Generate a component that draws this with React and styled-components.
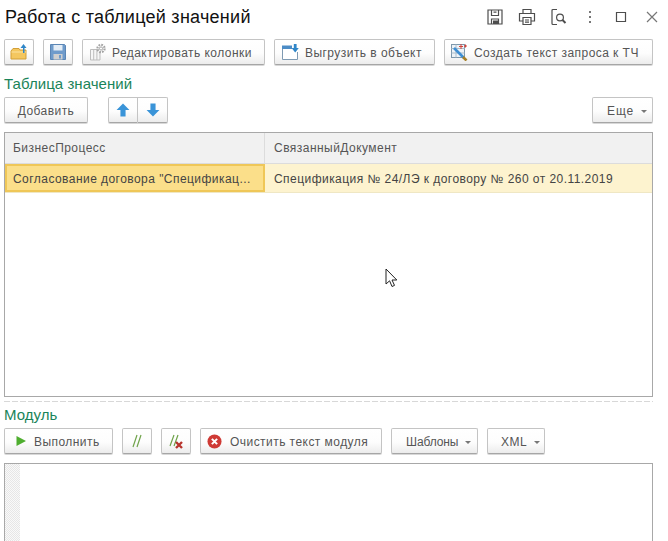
import React from 'react'
import styled, { createGlobalStyle } from 'styled-components'

const GlobalStyle = createGlobalStyle`
  html, body {
    margin: 0;
    padding: 0;
    background: #fff;
    overflow: hidden;
  }
  body {
    font-family: "Liberation Sans", Arial, sans-serif;
    color: #555;
  }
`

const Page = styled.div`
  position: relative;
  width: 668px;
  height: 541px;
  overflow: hidden;
  background: #fff;
`

const Header = styled.div`
  display: flex;
  align-items: center;
  height: 34px;
  padding: 0 0 0 5px;
  box-sizing: border-box;
`

const Title = styled.h1`
  flex: 1;
  margin: 0;
  font-size: 18px;
  font-weight: 400;
  color: #111;
  letter-spacing: 0.26px;
`

const WindowIcons = styled.div`
  display: flex;
  align-items: center;
  margin-right: 7px;
`

const WindowIcon = styled.svg`
  display: block;
  width: 18px;
  height: 18px;
  margin-left: ${props => props.$gap || 0}px;
  fill: none;
  stroke: #4d4d4d;
  stroke-width: 1.2;
`

const Toolbar = styled.div`
  display: flex;
  align-items: center;
  gap: 9px;
  padding: 0 15px 0 4px;
  margin-top: ${props => props.$top || 0}px;
`

const Button = styled.div`
  display: flex;
  align-items: center;
  justify-content: ${props => (props.$pad ? 'flex-start' : 'center')};
  box-sizing: border-box;
  width: ${props => props.$w}px;
  height: 26px;
  padding-left: ${props => props.$pad || 0}px;
  padding-top: 1px;
  background: linear-gradient(#fff 0%, #fdfdfd 55%, #ececec 100%);
  border: 1px solid #c4c4c4;
  border-bottom-color: #a6a6a6;
  border-radius: 2px;
  box-shadow: 0 1px 0 #d8d8d8;
  font-size: 12px;
  letter-spacing: ${props => props.$spacing ?? 0.45}px;
  color: #555;
  white-space: nowrap;
`

const ButtonIcon = styled.svg`
  display: block;
  flex: none;
  width: ${props => props.$size || 18}px;
  height: ${props => props.$size || 18}px;
  margin-top: -1px;
  margin-right: ${props => props.$gap || 0}px;
`

const Caret = styled.span`
  width: 0;
  height: 0;
  margin: 1px 0 0 7px;
  border-left: 3px solid transparent;
  border-right: 3px solid transparent;
  border-top: 3px solid #777;
`

const Spacer = styled.div`
  flex: 1;
`

const ArrowGroup = styled.div`
  display: flex;
  margin-left: 11px;
`

const ArrowButton = styled(Button)`
  border-radius: ${props => (props.$left ? '2px 0 0 2px' : '0 2px 2px 0')};
  border-left-width: ${props => (props.$left ? 1 : 0)}px;
`

const SectionLabel = styled.div`
  height: 16px;
  margin: ${props => props.$top}px 0 0 4px;
  font-size: 15px;
  line-height: 16px;
  color: #1a8459;
  letter-spacing: 0.05px;
`

const Table = styled.div`
  box-sizing: border-box;
  width: 649px;
  height: 265px;
  margin: 9px 0 0 4px;
  border: 1px solid #a8a8a8;
`

const HeadRow = styled.div`
  display: grid;
  grid-template-columns: 260px 1fr;
  height: 30px;
  background: #f1f1f1;
  border-bottom: 1px solid #dcdcdc;
`

const HeadCell = styled.div`
  display: flex;
  align-items: center;
  padding-left: ${props => (props.$last ? 9 : 8)}px;
  font-size: 12px;
  letter-spacing: 0.46px;
  color: #555;
  border-right: ${props => (props.$last ? 'none' : '1px solid #dcdcdc')};
`

const DataRow = styled.div`
  display: grid;
  grid-template-columns: 260px 1fr;
  height: 28px;
  background: #fdf3cf;
  border-bottom: 1px solid #efe7c4;
`

const DataCell = styled.div`
  display: flex;
  align-items: center;
  box-sizing: border-box;
  padding-left: ${props => (props.$active ? 6 : 9)}px;
  padding-top: 1px;
  font-size: 12px;
  letter-spacing: ${props => (props.$active ? 0.45 : 0.45)}px;
  color: #444;
  white-space: nowrap;
  background: ${props => (props.$active ? '#fbdf8a' : 'transparent')};
  border: ${props => (props.$active ? '2px solid #efc758' : 'none')};
`

const Divider = styled.div`
  width: 649px;
  height: 1px;
  margin: 4px 0 0 4px;
  background: repeating-linear-gradient(90deg, #d8d8d8 0 6px, transparent 6px 8px);
`

const Editor = styled.div`
  display: flex;
  box-sizing: border-box;
  width: 649px;
  height: 90px;
  margin: 9px 0 0 4px;
  border: 1px solid #a8a8a8;
`

const Gutter = styled.div`
  width: 15px;
  background-color: #f9f9f9;
  background-image: repeating-conic-gradient(#e6e6e6 0 25%, #f9f9f9 0 50%);
  background-size: 2px 2px;
`

const Pointer = styled.svg`
  position: absolute;
  left: 385px;
  top: 268px;
  width: 14px;
  height: 21px;
`

function FolderIcon() {
  return (
    <ButtonIcon viewBox="0 0 18 18">
      <path d="M1 8 L3 5.5 H9 L10 7 H16 V16 H1 Z" fill="#f4c75f" stroke="#d39f37" />
      <path d="M1.5 9 H16" stroke="#fbe3a2" />
      <path d="M13 10 V5 H10.5 L13.5 1 L16.5 5 H14.5 V10 Z" fill="#2f86c8" />
    </ButtonIcon>
  )
}

function SaveIcon() {
  return (
    <ButtonIcon viewBox="0 0 18 18">
      <path d="M1.5 1.5 H15.5 L16.5 2.5 V16.5 H1.5 Z" fill="#6f9bcb" stroke="#5b86b5" />
      <rect x="4.5" y="2" width="9" height="5.5" fill="#e4edf6" />
      <rect x="4.5" y="11" width="9" height="5.5" fill="#cfcfcf" />
      <rect x="10" y="12" width="2" height="3.5" fill="#6f9bcb" />
    </ButtonIcon>
  )
}

function ColumnsGearIcon() {
  return (
    <ButtonIcon viewBox="0 0 18 18" $gap={5}>
      <path d="M1.5 6.5 H11 V17 H1.5 Z M4.7 6.5 V17 M7.9 6.5 V17" fill="#f6f6f6" stroke="#bdbdbd" />
      <circle cx="12" cy="5.5" r="3.6" fill="#fff" stroke="#a3a3a3" strokeWidth="2.2" strokeDasharray="1.7 1.1" />
      <circle cx="12" cy="5.5" r="1.6" fill="#fff" stroke="#a3a3a3" />
    </ButtonIcon>
  )
}

function ExportIcon() {
  return (
    <ButtonIcon viewBox="0 0 18 18" $gap={6}>
      <path d="M1.5 5 V16.5 H16.5 V9" fill="#fff" stroke="#7f9ab2" />
      <path d="M1 2.5 H11 V6 H1 Z" fill="#4c8cc6" />
      <path d="M12.8 1 H15.6 V5 H17.8 L14.2 9.5 L10.6 5 H12.8 Z" fill="#2f86c8" />
    </ButtonIcon>
  )
}

function QueryIcon() {
  return (
    <ButtonIcon viewBox="0 0 18 18" $gap={6}>
      <rect x="1.5" y="1.5" width="13" height="13" fill="#eef3f7" stroke="#7d97ab" />
      <path d="M1.5 5.5 H14.5 M6 1.5 V14.5 M1.5 10 H14.5" stroke="#a9bccb" />
      <path d="M9 3.5 H13 M11 1 V6 M14 3 H17 M15.5 1.5 V4.5" stroke="#d2433a" />
      <path d="M4 5 L13.5 14.5" stroke="#3f8fd3" strokeWidth="2.6" />
      <path d="M13 14 L16.5 17.5" stroke="#a67f27" strokeWidth="2.6" />
    </ButtonIcon>
  )
}

function PlayIcon() {
  return (
    <ButtonIcon viewBox="0 0 12 12" $size={12} $gap={7}>
      <path d="M1.5 1 L11 6 L1.5 11 Z" fill="#4fae2f" />
    </ButtonIcon>
  )
}

function CommentIcon({ clear }) {
  return (
    <ButtonIcon viewBox="0 0 18 18">
      <path d={clear ? 'M7 3 L3 14 M11 3 L7 14' : 'M9 3 L5 15 M13 3 L9 15'} stroke="#6fa34a" strokeWidth="1.2" fill="none" />
      {clear && <path d="M9 10 L15 16 M15 10 L9 16" stroke="#b8352e" strokeWidth="2.4" />}
    </ButtonIcon>
  )
}

function ClearIcon() {
  return (
    <ButtonIcon viewBox="0 0 16 16" $size={15} $gap={8}>
      <circle cx="8" cy="8" r="7.5" fill="#cf3a35" />
      <path d="M5.2 5.2 L10.8 10.8 M10.8 5.2 L5.2 10.8" stroke="#fff" strokeWidth="2.2" />
    </ButtonIcon>
  )
}

function ArrowIcon({ down }) {
  return (
    <ButtonIcon viewBox="0 0 12 12" $size={14}>
      <path
        d={down ? 'M3.8 0.5 H8.2 V6 H11.5 L6 11.5 L0.5 6 H3.8 Z' : 'M3.8 11.5 H8.2 V6 H11.5 L6 0.5 L0.5 6 H3.8 Z'}
        fill="#3a94d8"
      />
    </ButtonIcon>
  )
}

export default function App() {
  return (
    <Page>
      <GlobalStyle />
      <Header>
        <Title>Работа с таблицей значений</Title>
        <WindowIcons>
          <WindowIcon viewBox="0 0 18 18">
            <path d="M2 2 H16 V16 H2 Z M5.5 2 V7.5 H12.5 V2 M7.5 4.2 H10.5 M5.5 16 V11 H12.5 V16" />
            <rect x="7" y="12.5" width="5" height="3.5" fill="#4d4d4d" stroke="none" />
          </WindowIcon>
          <WindowIcon viewBox="0 0 18 18" $gap={14}>
            <path d="M5 5.5 V1.5 H13 V5.5 M5 13 H1.5 V5.5 H16.5 V13 H13 M5 9.5 H13 V16.5 H5 Z M7 12 H11 M7 14.2 H11" />
          </WindowIcon>
          <WindowIcon viewBox="0 0 18 18" $gap={14}>
            <path d="M7 1.5 H3 Q2 1.5 2 2.5 V15.5 Q2 16.5 3 16.5 H7" />
            <circle cx="10" cy="9.5" r="3.4" />
            <path d="M12.5 12 L15.5 15" strokeWidth="2" />
          </WindowIcon>
          <WindowIcon viewBox="0 0 18 18" $gap={13}>
            <path d="M9 3 V5 M9 8 V10 M9 13 V15" strokeWidth="2" stroke="#777" />
          </WindowIcon>
          <WindowIcon viewBox="0 0 18 18" $gap={13}>
            <path d="M4.5 4.5 H13.5 V13.5 H4.5 Z" />
          </WindowIcon>
          <WindowIcon viewBox="0 0 18 18" $gap={13}>
            <path d="M4 4 L14 14 M14 4 L4 14" stroke="#777" />
          </WindowIcon>
        </WindowIcons>
      </Header>

      <Toolbar $top={5}>
        <Button $w={30}><FolderIcon /></Button>
        <Button $w={30}><SaveIcon /></Button>
        <Button $w={183} $pad={6}><ColumnsGearIcon />Редактировать колонки</Button>
        <Button $w={161} $pad={6}><ExportIcon />Выгрузить в объект</Button>
        <Button $w={209} $pad={5}><QueryIcon />Создать текст запроса к ТЧ</Button>
      </Toolbar>

      <SectionLabel $top={11}>Таблица значений</SectionLabel>

      <Toolbar $top={5}>
        <Button $w={84}>Добавить</Button>
        <ArrowGroup>
          <ArrowButton $w={30} $left><ArrowIcon /></ArrowButton>
          <ArrowButton $w={30}><ArrowIcon down /></ArrowButton>
        </ArrowGroup>
        <Spacer />
        <Button $w={61} $pad={14} $spacing={0.9}>Еще<Caret /></Button>
      </Toolbar>

      <Table>
        <HeadRow>
          <HeadCell>БизнесПроцесс</HeadCell>
          <HeadCell $last>СвязанныйДокумент</HeadCell>
        </HeadRow>
        <DataRow>
          <DataCell $active>Согласование договора "Спецификац...</DataCell>
          <DataCell>Спецификация № 24/ЛЭ к договору № 260 от 20.11.2019</DataCell>
        </DataRow>
      </Table>

      <Divider />
      <SectionLabel $top={5}>Модуль</SectionLabel>

      <Toolbar $top={5}>
        <Button $w={109} $pad={10}><PlayIcon />Выполнить</Button>
        <Button $w={30}><CommentIcon /></Button>
        <Button $w={30}><CommentIcon clear /></Button>
        <Button $w={182} $pad={6}><ClearIcon />Очистить текст модуля</Button>
        <Button $w={87} $pad={14} $spacing={-0.1}>Шаблоны<Caret /></Button>
        <Button $w={58} $pad={13}>XML<Caret /></Button>
      </Toolbar>

      <Editor>
        <Gutter />
      </Editor>

      <Pointer viewBox="0 0 14 21">
        <path d="M1 1 V16 L4.6 12.8 L7 18.5 L9.5 17.4 L7 12 H11.8 Z" fill="#fff" stroke="#222" strokeWidth="1" />
      </Pointer>
    </Page>
  )
}
